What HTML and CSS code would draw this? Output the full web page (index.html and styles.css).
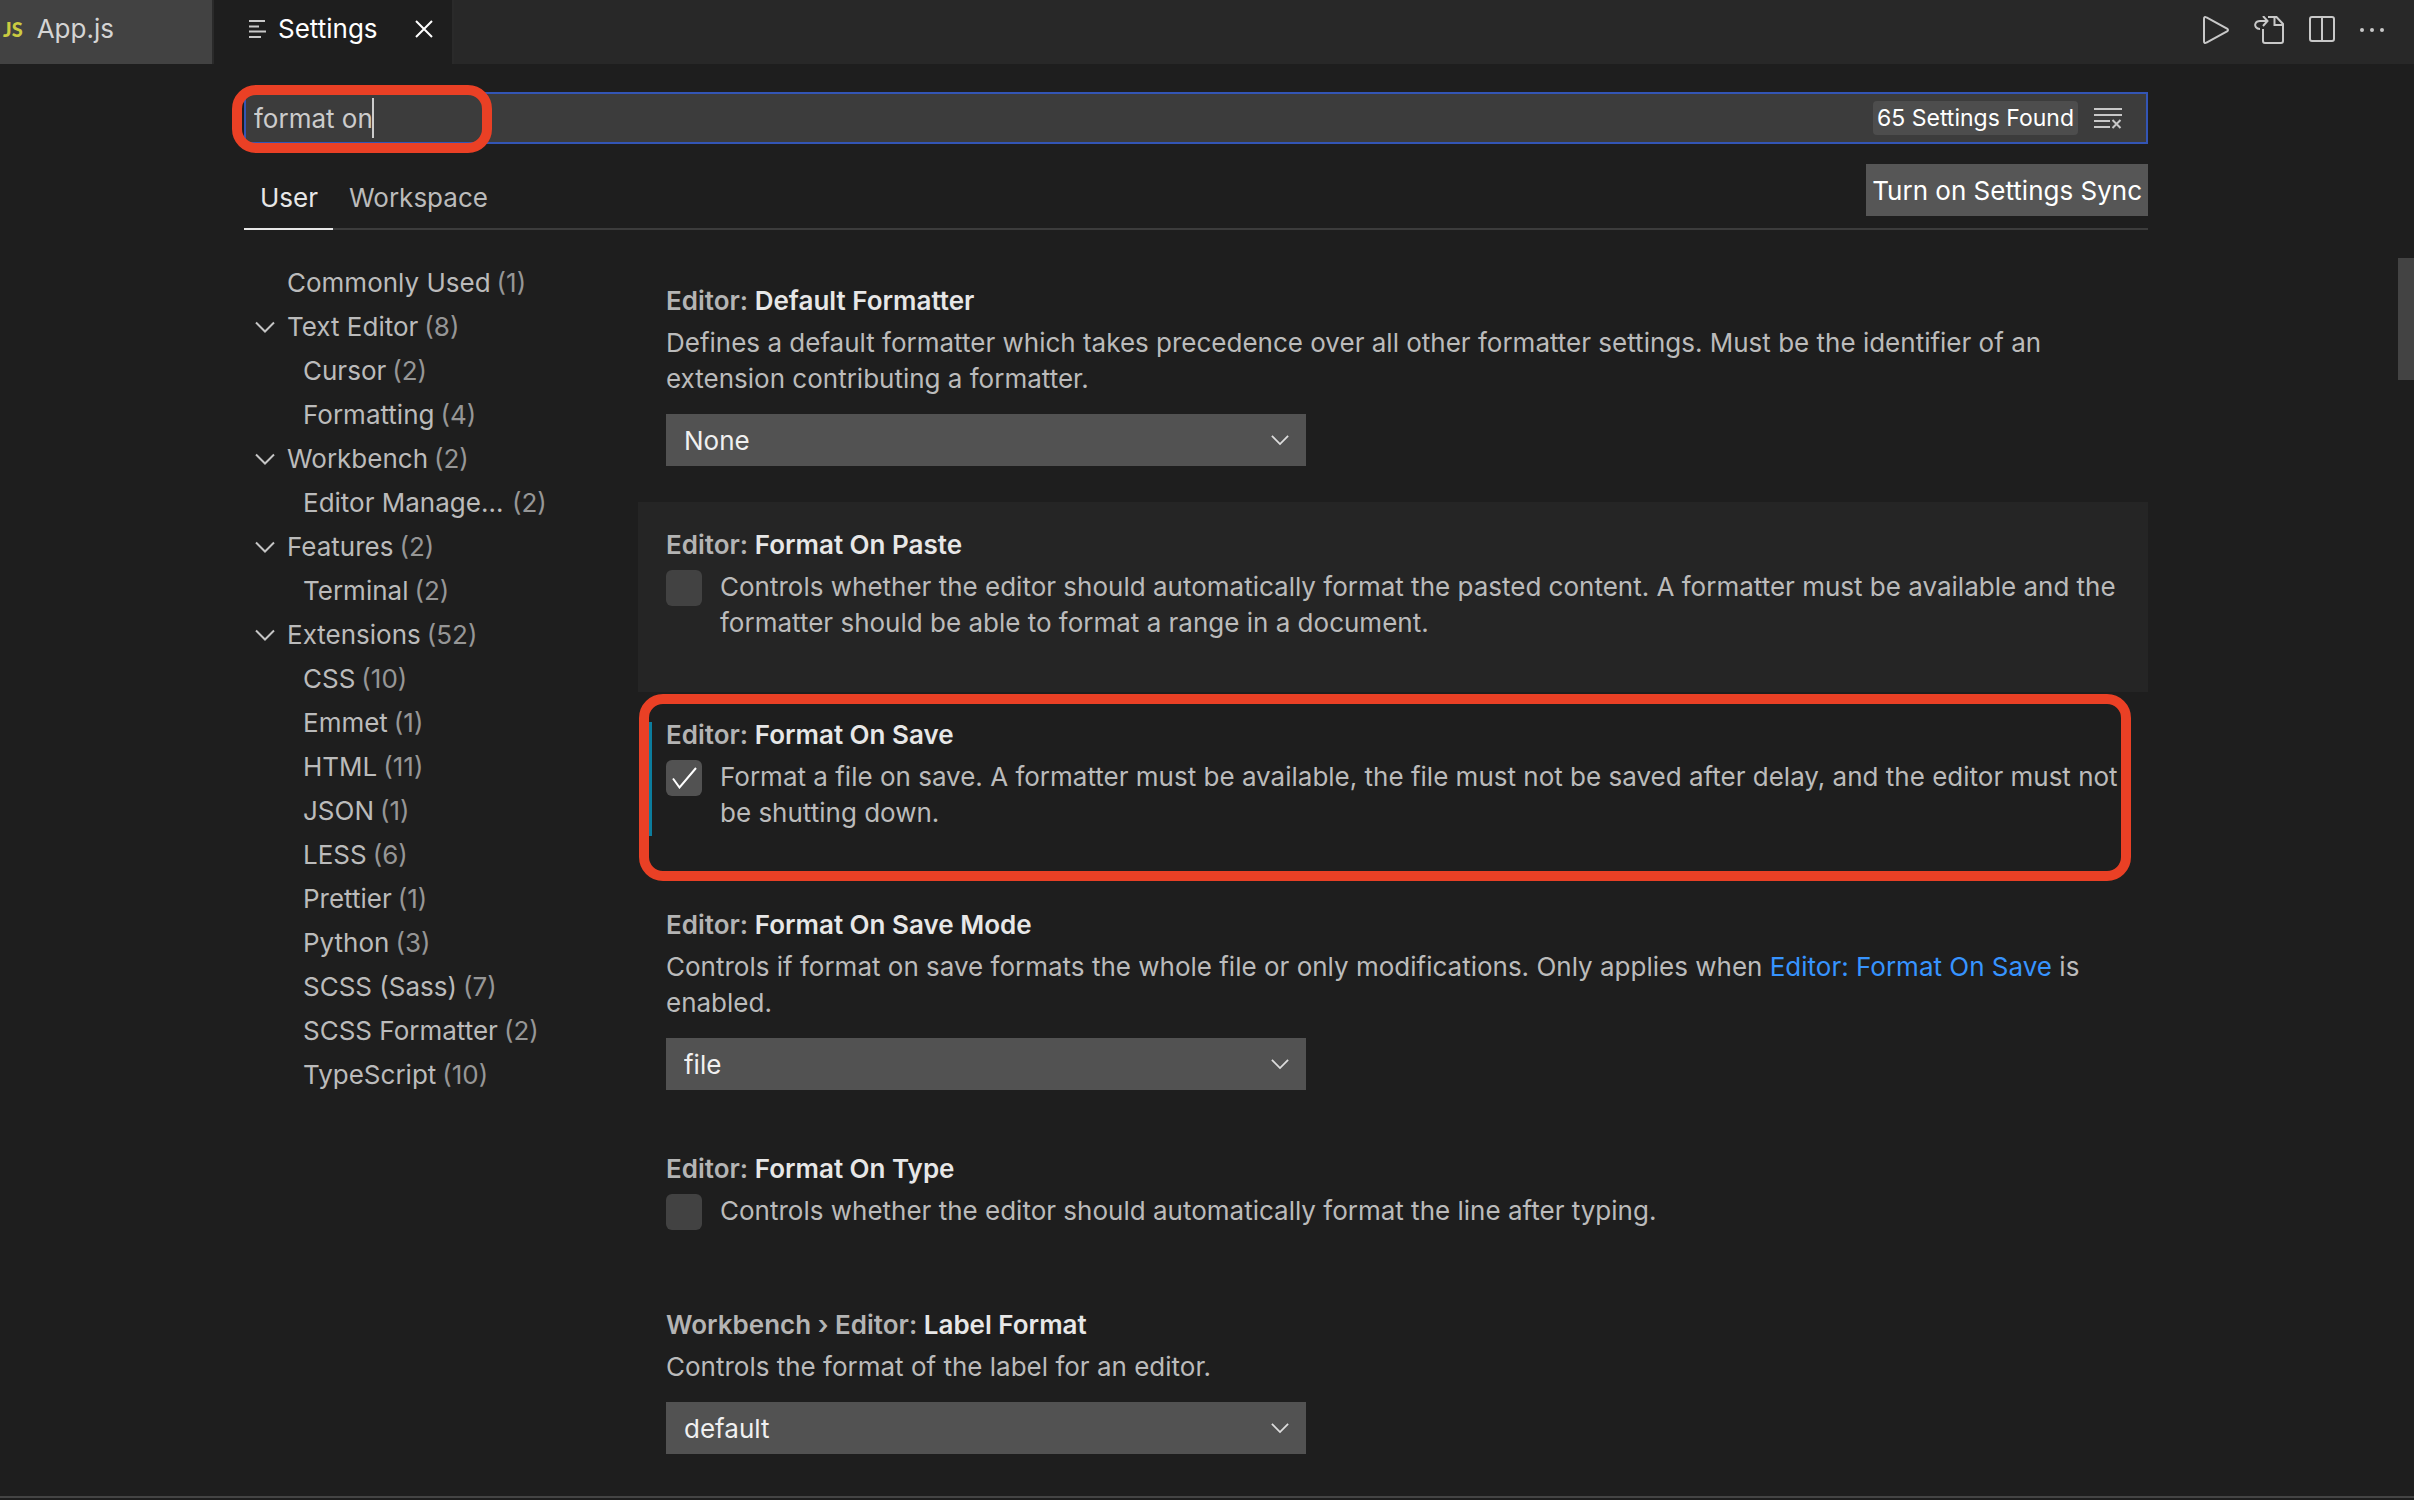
FILE: index.html
```html
<!DOCTYPE html>
<html lang="en">
<head>
<meta charset="utf-8">
<title>Settings</title>
<link rel="stylesheet" href="styles.css">
</head>
<body>
<svg class="sprite" aria-hidden="true">
  <symbol id="chevron" viewBox="0 0 20 12"><path d="M1 1.500 10 10.500 19 1.500" fill="none" stroke="currentColor" stroke-width="2"/></symbol>
</svg>
<header class="tabbar">
  <a class="tab tab-file" href="#app"><span class="js">JS</span>App.js</a>
  <div class="tab tab-active">
    <svg class="list-icon" width="18" height="20" viewBox="0 0 18 20"><path d="M0 2h16M0 7.500h10M0 12.500h17M0 18h12" stroke="#c8c8c8" stroke-width="2" fill="none"/></svg>
    <span class="tab-name">Settings</span>
    <button class="icon-button" aria-label="Close"><svg width="18" height="18" viewBox="0 0 18 18"><path d="M1 1 17 17M17 1 1 17" stroke="#fff" stroke-width="2" fill="none"/></svg></button>
  </div>
  <nav class="actions" aria-label="Editor actions">
    <button class="icon-button" aria-label="Run"><svg width="26" height="28" viewBox="0 0 26 28"><path d="M1 3V25Q1 28 3.500 26.500L24 15.500Q26 14 24 12.500L3.500 1.500Q1 0 1 3Z" fill="none" stroke="currentColor" stroke-width="2"/></svg></button>
    <button class="icon-button" aria-label="Open Settings (JSON)"><svg width="30" height="28" viewBox="0 0 30 28"><path d="M9 13V25Q9 27 11 27H27Q29 27 29 25V8L22.500 1H14M20.500 1V9H29M6 13C2 13 .5 10 1.500 7.500Q2.500 5 6 5H13M9 0 13.500 5 9 10" fill="none" stroke="currentColor" stroke-width="2"/></svg></button>
    <button class="icon-button" aria-label="Split Editor"><svg width="26" height="28" viewBox="0 0 26 28"><path d="M3 1H23Q25 1 25 3V23Q25 25 23 25H3Q1 25 1 23V3Q1 1 3 1ZM13 1V25" fill="none" stroke="currentColor" stroke-width="2"/></svg></button>
    <button class="icon-button" aria-label="More Actions"><svg width="25" height="6" viewBox="0 0 25 6" fill="currentColor"><circle cx="2" cy="3" r="2"/><circle cx="12" cy="3" r="2"/><circle cx="22" cy="3" r="2"/></svg></button>
  </nav>
</header>
<main class="editor">
  <div class="search">
    <input class="search-input" type="text" aria-label="Search settings" value="format on">
    <span class="caret"></span>
    <span class="count">65 Settings Found</span>
    <button class="icon-button clear" aria-label="Clear search"><svg width="28" height="22" viewBox="0 0 28 22"><path d="M0 2H28M0 8H28M0 14H16M0 20H16M18.500 13 26.500 21M26.500 13 18.500 21" fill="none" stroke="currentColor" stroke-width="2"/></svg></button>
    <span class="mark mark-search"></span>
  </div>
  <div class="scopes">
    <a class="scope scope-active" href="#user">User</a>
    <a class="scope" href="#workspace">Workspace</a>
    <button class="sync">Turn on Settings Sync</button>
  </div>
  <div class="columns">
    <nav class="tree" aria-label="Settings groups">
      <a class="row" href="#"><span class="label">Commonly Used</span><span class="num">(1)</span></a>
      <a class="row" href="#"><svg class="twist"><use href="#chevron"/></svg><span class="label">Text Editor</span><span class="num">(8)</span></a>
      <a class="row child" href="#"><span class="label">Cursor</span><span class="num">(2)</span></a>
      <a class="row child" href="#"><span class="label">Formatting</span><span class="num">(4)</span></a>
      <a class="row" href="#"><svg class="twist"><use href="#chevron"/></svg><span class="label">Workbench</span><span class="num">(2)</span></a>
      <a class="row child" href="#"><span class="label label-cut">Editor Manage…</span><span class="num">(2)</span></a>
      <a class="row" href="#"><svg class="twist"><use href="#chevron"/></svg><span class="label">Features</span><span class="num">(2)</span></a>
      <a class="row child" href="#"><span class="label">Terminal</span><span class="num">(2)</span></a>
      <a class="row" href="#"><svg class="twist"><use href="#chevron"/></svg><span class="label">Extensions</span><span class="num">(52)</span></a>
      <a class="row child" href="#"><span class="label">CSS</span><span class="num">(10)</span></a>
      <a class="row child" href="#"><span class="label">Emmet</span><span class="num">(1)</span></a>
      <a class="row child" href="#"><span class="label">HTML</span><span class="num">(11)</span></a>
      <a class="row child" href="#"><span class="label">JSON</span><span class="num">(1)</span></a>
      <a class="row child" href="#"><span class="label">LESS</span><span class="num">(6)</span></a>
      <a class="row child" href="#"><span class="label">Prettier</span><span class="num">(1)</span></a>
      <a class="row child" href="#"><span class="label">Python</span><span class="num">(3)</span></a>
      <a class="row child" href="#"><span class="label">SCSS (Sass)</span><span class="num">(7)</span></a>
      <a class="row child" href="#"><span class="label">SCSS Formatter</span><span class="num">(2)</span></a>
      <a class="row child" href="#"><span class="label">TypeScript</span><span class="num">(10)</span></a>
    </nav>
    <div class="settings">
      <section class="item">
        <h2 class="title" id="t1"><span class="cat">Editor:</span> Default Formatter</h2>
        <p class="desc">Defines a default formatter which takes precedence over all other formatter settings. Must be the identifier of an extension contributing a formatter.</p>
        <div class="select-wrap"><select class="select" aria-labelledby="t1"><option>None</option></select><svg class="select-arrow"><use href="#chevron"/></svg></div>
      </section>
      <section class="item item-hover">
        <h2 class="title"><span class="cat">Editor:</span> Format On Paste</h2>
        <div class="check-row"><input class="check" type="checkbox" id="paste"><label class="desc" for="paste">Controls whether the editor should automatically format the pasted content. A formatter must be available and the formatter should be able to format a range in a document.</label></div>
      </section>
      <section class="item item-modified">
        <h2 class="title"><span class="cat">Editor:</span> Format On Save</h2>
        <div class="check-row"><input class="check" type="checkbox" id="save" checked><svg class="tick" width="26" height="22" viewBox="0 0 26 22"><path d="M1 11.500 7.500 20.500 24 1" fill="none" stroke="#fff" stroke-width="2"/></svg><label class="desc" for="save">Format a file on save. A formatter must be available, the file must not be saved after delay, and the editor must not be shutting down.</label></div>
        <span class="mark mark-item"></span>
      </section>
      <section class="item">
        <h2 class="title" id="t4"><span class="cat">Editor:</span> Format On Save Mode</h2>
        <p class="desc">Controls if format on save formats the whole file or only modifications. Only applies when <a class="link" href="#save">Editor: Format On Save</a> is enabled.</p>
        <div class="select-wrap"><select class="select" aria-labelledby="t4"><option>file</option></select><svg class="select-arrow"><use href="#chevron"/></svg></div>
      </section>
      <section class="item">
        <h2 class="title"><span class="cat">Editor:</span> Format On Type</h2>
        <div class="check-row"><input class="check" type="checkbox" id="type"><label class="desc" for="type">Controls whether the editor should automatically format the line after typing.</label></div>
      </section>
      <section class="item">
        <h2 class="title" id="t6"><span class="cat">Workbench › Editor:</span> Label Format</h2>
        <p class="desc">Controls the format of the label for an editor.</p>
        <div class="select-wrap"><select class="select" aria-labelledby="t6"><option>default</option></select><svg class="select-arrow"><use href="#chevron"/></svg></div>
      </section>
    </div>
  </div>
  <span class="scrollbar"></span>
</main>
<footer class="panel-edge"></footer>
</body>
</html>
```
FILE: styles.css
```css
* { box-sizing: border-box; }
body {
  margin: 0;
  min-height: 100vh;
  display: flex;
  flex-direction: column;
  background: #1e1e1e;
  color: #bbb;
  font: 26px/36px Inter, "Liberation Sans", sans-serif;
}
a { color: inherit; text-decoration: none; }
button, input, select { font: inherit; color: inherit; border: 0; border-radius: 0; margin: 0; padding: 0; outline: 0; }
svg { display: block; }
.sprite { width: 0; height: 0; position: absolute; }
.icon-button { background: none; color: #c8c8c8; }

.tabbar { display: flex; height: 64px; background: #282828; }
.tab { display: flex; align-items: center; padding-bottom: 6px; border-right: 2px solid #2a2a2a; }
.tab-file { width: 214px; padding-left: 3px; gap: 14px; background: #424242; color: #d4d4d4; }
.js { font-family: Lato, sans-serif; font-weight: 900; font-size: 20px; color: #cbcb41; }
.tab-active { width: 240px; padding-left: 35px; padding-right: 19px; background: #1e1e1e; color: #fff; }
.tab-name { flex: 1; padding-left: 11px; }
.actions { margin-left: auto; display: flex; align-items: center; gap: 25px; padding: 0 29px 4px 0; }

.editor { position: relative; flex: 1; padding: 28px 266px 0 244px; }
.search { position: relative; display: flex; align-items: center; height: 52px; padding: 0 24px 0 8px; border: 2px solid #3355b5; background: #3c3c3c; }
.search-input { flex: 1; min-width: 0; padding-top: 2px; background: none; color: #ccc; caret-color: transparent; }
.caret { position: absolute; left: 126px; top: 4px; width: 2px; height: 40px; background: #ccc; }
.count { padding: 0 4px; height: 34px; line-height: 34px; border-radius: 4px; background: #4d4d4d; color: #fff; font-size: 23px; }
.clear { margin-left: 16px; }
.mark { position: absolute; border: 10px solid #ea4025; border-radius: 24px; pointer-events: none; }
.mark-search { left: -14px; top: -9px; width: 260px; height: 68px; }
.mark-item { left: 1px; right: 17px; top: 2px; bottom: 1px; }

.scopes { display: flex; align-items: flex-start; height: 86px; padding-top: 20px; border-bottom: 2px solid #3c3c3c; }
.scope { height: 66px; padding: 16px 15px 0 16px; }
.scope-active { color: #e7e7e7; border-bottom: 2px solid #e7e7e7; }
.sync { margin-left: auto; height: 52px; padding: 1px 6px 0; background: #565656; color: #fff; }

.columns { display: flex; padding-top: 28px; }
.tree { width: 394px; flex: none; padding-top: 3px; }
.row { position: relative; display: flex; align-items: center; gap: 6px; height: 44px; padding-left: 43px; }
.child { padding-left: 59px; }
.twist { position: absolute; left: 11px; width: 20px; height: 12px; color: #c5c5c5; }
.label { white-space: nowrap; }
.label-cut { min-width: 203px; }
.num { color: #969696; }

.settings { flex: 1; min-width: 0; }
.item { position: relative; padding: 25px 20px 36px 28px; }
.item-hover { background: #252525; }
.item-modified::before { content: ""; position: absolute; left: 10px; top: 30px; width: 4px; height: 114px; background: #0c7d9d; }
.title { margin: 0 0 6px; font-size: 26px; line-height: 36px; font-weight: 600; color: #e7e7e7; }
.cat { color: #b4b4b4; }
.desc { margin: 0; color: #bbb; }
.link { color: #3794ff; }
.select-wrap { position: relative; width: 640px; max-width: 100%; margin-top: 17px; }
.select { display: block; width: 100%; height: 52px; padding: 2px 18px 0; appearance: none; background: #525252; color: #f0f0f0; }
.select-arrow { position: absolute; right: 17px; top: 20px; width: 18px; height: 12px; color: #ddd; pointer-events: none; }
.check-row { position: relative; display: flex; gap: 18px; min-height: 38px; margin-bottom: 15px; }
.check { appearance: none; flex: none; width: 36px; height: 36px; margin-top: 1px; border-radius: 6px; background: #424242; }
.check:checked { background: #525252; }
.tick { position: absolute; left: 6px; top: 8px; pointer-events: none; }

.scrollbar { position: absolute; right: 0; top: 194px; width: 16px; height: 122px; background: #434343; }
.panel-edge { height: 4px; border-top: 2px solid #444; }
```
